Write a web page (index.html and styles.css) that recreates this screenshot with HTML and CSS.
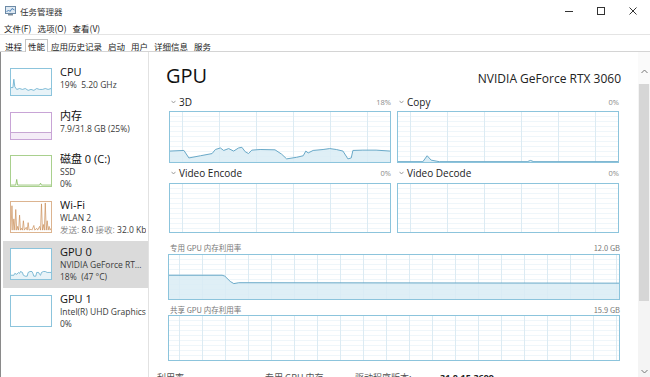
FILE: index.html
```html
<!DOCTYPE html>
<html lang="zh">
<head>
<meta charset="utf-8">
<title>任务管理器</title>
<link rel="stylesheet" href="styles.css">
</head>
<body>
<div class="window">
  <div class="titlebar">
    <svg class="app-icon" width="11" height="10" viewBox="0 0 11 10"><rect x="0.5" y="0.5" width="10" height="7" fill="#dfe9f2" stroke="#6c8aa6"/><polyline points="1.5,6 3.5,4 5,5.5 7,2.5 9.5,4" fill="none" stroke="#3c78b4" stroke-width="0.9"/><rect x="3" y="8" width="5" height="1.5" fill="#7d8b98"/></svg>
    <span class="app-title">任务管理器</span>
    <span class="spacer"></span>
    <span class="ctl"><svg width="10" height="10" viewBox="0 0 10 10"><line x1="1" y1="5.5" x2="9" y2="5.5" stroke="#333" stroke-width="1"/></svg></span>
    <span class="ctl"><svg width="10" height="10" viewBox="0 0 10 10"><rect x="1.5" y="1.5" width="7" height="7" fill="none" stroke="#333" stroke-width="1"/></svg></span>
    <span class="ctl"><svg width="10" height="10" viewBox="0 0 10 10"><path d="M1.5 1.5 L8.5 8.5 M8.5 1.5 L1.5 8.5" stroke="#333" stroke-width="1"/></svg></span>
  </div>
  <div class="menubar">
    <span>文件(F)</span><span>选项(O)</span><span>查看(V)</span>
  </div>
  <div class="tabs">
    <span class="tab">进程</span>
    <span class="tab active">性能</span>
    <span class="tab">应用历史记录</span>
    <span class="tab">启动</span>
    <span class="tab">用户</span>
    <span class="tab">详细信息</span>
    <span class="tab">服务</span>
  </div>
  <div class="content">
    <div class="sidebar">
      <div class="item h44">
        <svg class="thumb small blue" viewBox="0 0 42 28" preserveAspectRatio="none"><polygon points="0,20 2,20 3,11 4,19 6,22 9,21 12,22 15,21 18,23 21,22 24,23 27,21 30,22 33,22 36,21 39,22 42,21 42,28 0,28" fill="#e8f3f8"/><polyline points="0,20 2,20 3,11 4,19 6,22 9,21 12,22 15,21 18,23 21,22 24,23 27,21 30,22 33,22 36,21 39,22 42,21" fill="none" stroke="#5aa7c9" stroke-width="0.8"/></svg>
        <div class="info"><div class="name">CPU</div><div class="sub">19%&nbsp; 5.20 GHz</div></div>
      </div>
      <div class="item h43">
        <svg class="thumb small purple" viewBox="0 0 42 28" preserveAspectRatio="none"><rect x="0" y="21" width="42" height="7" fill="#f4ecf7"/><line x1="0" y1="21" x2="42" y2="21" stroke="#b58bc6" stroke-width="0.8"/></svg>
        <div class="info"><div class="name">内存</div><div class="sub">7.9/31.8 GB (25%)</div></div>
      </div>
      <div class="item h46">
        <svg class="thumb green" viewBox="0 0 42 32" preserveAspectRatio="none"><polyline points="0,31 5,31 6,25 7,31 30,31 31,29 32,31 42,31" fill="none" stroke="#7fb857" stroke-width="0.8"/></svg>
        <div class="info"><div class="name">磁盘 0 (C:)</div><div class="sub">SSD</div><div class="sub">0%</div></div>
      </div>
      <div class="item h47">
        <svg class="thumb orange" viewBox="0 0 42 32" preserveAspectRatio="none"><polyline points="0,30 1,4 2,30 3,18 4,30 5,8 6,30 7,26 8,30 9,14 10,30 11,28 12,30 13,20 14,30 16,27 17,30 18,22 19,30 21,29 22,30 24,25 25,30 27,28 28,30 30,26 31,30 32,2 33,30 34,24 35,30 36,1 37,30 38,20 39,30 40,26 41,30 42,28" fill="none" stroke="#c98a52" stroke-width="0.7"/></svg>
        <div class="info"><div class="name">Wi-Fi</div><div class="sub">WLAN 2</div><div class="sub nowrap"><span class="dim">发送:</span> 8.0 <span class="dim">接收:</span> 32.0 Kbps</div></div>
      </div>
      <div class="item h47 selected">
        <svg class="thumb blue" viewBox="0 0 42 32" preserveAspectRatio="none"><polygon points="0,28 3,28 4,26 6,27 8,25 9,26 10,24 12,25 13,28 15,29 17,29 18,25 20,24 22,24 23,26 24,29 26,29 27,25 29,25 30,27 31,28 32,25 34,24 36,24 38,25 40,25 42,25 42,32 0,32" fill="#e8f3f8"/><polyline points="0,28 3,28 4,26 6,27 8,25 9,26 10,24 12,25 13,28 15,29 17,29 18,25 20,24 22,24 23,26 24,29 26,29 27,25 29,25 30,27 31,28 32,25 34,24 36,24 38,25 40,25 42,25" fill="none" stroke="#5aa7c9" stroke-width="0.8"/></svg>
        <div class="info"><div class="name">GPU 0</div><div class="sub">NVIDIA GeForce RT...</div><div class="sub">18%&nbsp; (47 °C)</div></div>
      </div>
      <div class="item h47">
        <svg class="thumb blue" viewBox="0 0 42 32"></svg>
        <div class="info"><div class="name">GPU 1</div><div class="sub nowrap">Intel(R) UHD Graphics</div><div class="sub">0%</div></div>
      </div>
    </div>
    <div class="main">
      <div class="header">
        <span class="big">GPU</span>
        <span class="model">NVIDIA GeForce RTX 3060</span>
      </div>
      <div class="grid2">
        <div class="panel">
          <div class="label"><span class="lbl"><svg class="chev" width="5" height="4" viewBox="0 0 5 4"><polyline points="0.5,0.8 2.5,3 4.5,0.8" fill="none" stroke="#888" stroke-width="0.8"/></svg>3D</span><span class="pct">18%</span></div>
          <div class="chart c52">
            <svg viewBox="0 0 664 160" preserveAspectRatio="none"><polygon points="0,125 42,123 57,147 92,140 127,133 137,120 152,115 162,123 177,117 192,125 207,115 217,113 227,127 237,133 247,122 272,120 317,121 337,135 352,150 382,145 402,140 410,125 417,131 432,123 462,120 482,117 502,120 522,125 537,150 547,147 552,123 582,122 622,122 664,125 664,160 0,160" fill="#d9ecf5" fill-opacity="0.85"/><polyline points="0,125 42,123 57,147 92,140 127,133 137,120 152,115 162,123 177,117 192,125 207,115 217,113 227,127 237,133 247,122 272,120 317,121 337,135 352,150 382,145 402,140 410,125 417,131 432,123 462,120 482,117 502,120 522,125 537,150 547,147 552,123 582,122 622,122 664,125" fill="none" stroke="#69a9c8" stroke-width="1" vector-effect="non-scaling-stroke"/></svg>
          </div>
        </div>
        <div class="panel">
          <div class="label"><span class="lbl"><svg class="chev" width="5" height="4" viewBox="0 0 5 4"><polyline points="0.5,0.8 2.5,3 4.5,0.8" fill="none" stroke="#888" stroke-width="0.8"/></svg>Copy</span><span class="pct">0%</span></div>
          <div class="chart c52">
            <svg viewBox="0 0 664 160" preserveAspectRatio="none"><polygon points="0,159 75,159 88,140 100,154 115,157 125,159 390,159 400,155 410,159 664,159 664,160 0,160" fill="#d9ecf5"/><polyline points="0,159 75,159 88,140 100,154 115,157 125,159 390,159 400,155 410,159 664,159" fill="none" stroke="#69a9c8" stroke-width="1" vector-effect="non-scaling-stroke"/></svg>
          </div>
        </div>
        <div class="panel">
          <div class="label"><span class="lbl"><svg class="chev" width="5" height="4" viewBox="0 0 5 4"><polyline points="0.5,0.8 2.5,3 4.5,0.8" fill="none" stroke="#888" stroke-width="0.8"/></svg>Video Encode</span><span class="pct">0%</span></div>
          <div class="chart c50"></div>
        </div>
        <div class="panel">
          <div class="label"><span class="lbl"><svg class="chev" width="5" height="4" viewBox="0 0 5 4"><polyline points="0.5,0.8 2.5,3 4.5,0.8" fill="none" stroke="#888" stroke-width="0.8"/></svg>Video Decode</span><span class="pct">0%</span></div>
          <div class="chart c50"></div>
        </div>
      </div>
      <div class="wide first">
        <div class="label small"><span>专用 GPU 内存利用率</span><span>12.0 GB</span></div>
        <div class="chart wide-chart">
          <svg viewBox="0 0 1000 100" preserveAspectRatio="none"><polygon points="0,46 118,46 124,48 136,60 144,65 155,63 1000,64 1000,100 0,100" fill="#d9ecf5" fill-opacity="0.85"/><polyline points="0,46 118,46 124,48 136,60 144,65 155,63 1000,64" fill="none" stroke="#69a9c8" stroke-width="1" vector-effect="non-scaling-stroke"/></svg>
        </div>
      </div>
      <div class="wide second">
        <div class="label small"><span>共享 GPU 内存利用率</span><span>15.9 GB</span></div>
        <div class="chart wide-chart"></div>
      </div>
      <div class="stats">
        <span class="s1">利用率</span>
        <span class="s2">专用 GPU 内存</span>
        <span class="s3">驱动程序版本:</span>
        <span class="s4">31.0.15.3699</span>
      </div>
    </div>
    <div class="scrollbar">
      <div class="arrow up"><svg width="7" height="5" viewBox="0 0 7 5"><polyline points="0.5,4 3.5,1 6.5,4" fill="none" stroke="#777" stroke-width="1"/></svg></div>
      <div class="sthumb"></div>
      <div class="strack"></div>
      <div class="arrow down"><svg width="7" height="5" viewBox="0 0 7 5"><polyline points="0.5,1 3.5,4 6.5,1" fill="none" stroke="#777" stroke-width="1"/></svg></div>
    </div>
  </div>
</div>
</body>
</html>
```
FILE: styles.css
```css
* { box-sizing: border-box; }
html, body { margin: 0; padding: 0; background: #fff; }
body {
  font-family: "Open Sans", "Noto Sans CJK SC", sans-serif;
  color: #1a1a1a;
  width: 650px;
  height: 377px;
  overflow: hidden;
}
.window { width: 650px; height: 377px; display: flex; flex-direction: column; overflow: hidden; }

.titlebar { height: 21px; display: flex; align-items: center; padding-left: 5px; flex: none; }
.app-icon { margin-right: 4px; margin-top: 0px; }
.app-title { font-family: "Noto Sans CJK SC", sans-serif; font-size: 8.5px; color: #333; }
.spacer { flex: 1; }
.ctl { width: 32px; height: 21px; display: flex; align-items: center; justify-content: center; }
.ctl:last-child { margin-right: 1px; }

.menubar { height: 13px; display: flex; align-items: center; gap: 6px; padding-left: 4px; font-size: 8.5px; color: #222; flex: none; font-family: "Noto Sans CJK SC", sans-serif; }

.tabs { height: 18px; display: flex; align-items: flex-end; padding-left: 2px; border-top: 1px solid #e4e4e4; border-bottom: 1px solid #d4d4d4; flex: none; font-family: "Noto Sans CJK SC", sans-serif; font-size: 8.5px; color: #222; }
.tab { padding: 0 2px; height: 13px; line-height: 12px; margin-bottom: -1px; border: 1px solid transparent; border-bottom: none; margin-right: 0; }
.tab.active { border-color: #c4c4c4; background: #fff; }

.content { flex: 1; display: flex; min-height: 0; }
.sidebar { width: 149px; flex: none; border-left: 1px solid #8a8a8a; border-right: 1px solid #e2e2e2; padding-top: 9px; overflow: hidden; }
.item { display: flex; align-items: flex-start; padding-left: 9px; padding-right: 2px; }
.item.h44 { height: 44px; }
.item.h43 { height: 43px; }
.item.h46 { height: 46px; }
.item.h47 { height: 47px; }
.item.selected { background: #dadada; margin-left: 2px; padding-left: 7px; }
.thumb { width: 42px; height: 32px; margin-top: 7px; flex: none; display: block; background: #fff; border: 1px solid; }
.thumb.small { height: 28px; }
.thumb.blue { border-color: #8cc4dc; }
.thumb.purple { border-color: #c8a4d6; }
.thumb.green { border-color: #a9d08e; }
.thumb.orange { border-color: #dcb490; }
.info { margin-left: 8px; padding-top: 4px; min-width: 0; overflow: hidden; }
.name { font-size: 11px; line-height: 14px; color: #111; white-space: nowrap; }
.sub { font-size: 8.5px; line-height: 12px; color: #3a3a3a; white-space: nowrap; }
.sub .dim { color: #8a8a8a; }
.nowrap { overflow: hidden; }

.main { flex: 1; min-width: 0; padding: 12px 18px 0 20px; overflow: hidden; }
.header { display: flex; align-items: baseline; justify-content: space-between; height: 24px; }
.big { font-size: 20px; line-height: 24px; margin-left: -3px; color: #111; }
.model { font-size: 12px; color: #222; margin-right: -1px; }

.grid2 { display: grid; grid-template-columns: 222px 222px; column-gap: 6px; margin-top: 7px; }
.panel:nth-child(3), .panel:nth-child(4) { margin-top: 3px; }
.label { display: flex; justify-content: space-between; align-items: center; height: 14px; font-size: 10px; color: #222; }
.lbl { display: flex; align-items: center; padding-left: 2px; }
.chev { margin-right: 3px; }
.pct { font-size: 7.5px; color: #8a8a8a; }
.chart {
  border: 1px solid #8cc4dc;
  background-color: #fff;
  background-image:
    linear-gradient(to right, #dcebf3 1px, transparent 1px),
    linear-gradient(to bottom, #eff6fa 1px, transparent 1px);
  background-size: 37px 100%, 100% 5px;
  background-position: 12px 0, 0 4px;
  margin-top: 2px;
}
.chart svg { display: block; width: 100%; height: 100%; }
.c52 { height: 52px; }
.c50 { height: 50px; margin-top: 3px; }

.wide.first { margin-top: 8px; }
.wide.second { margin-top: 3px; }
.label.small { height: 12px; font-size: 7.5px; color: #777; padding-left: 1px; font-family: "Noto Sans CJK SC", sans-serif; }
.wide-chart { height: 46px; margin-top: 1px; margin-left: -1px; background-size: 23px 100%, 100% 5px; background-position: 10px 0, 0 4px; }
.wide.second .wide-chart { margin-top: 0; }

.stats { display: flex; margin-top: 11px; margin-left: -12px; font-size: 9px; line-height: 12px; color: #555; font-family: "Noto Sans CJK SC", sans-serif; }
.s1 { width: 108px; }
.s2 { width: 90px; }
.s3 { width: 85px; }
.s4 { color: #222; font-weight: 700; font-family: "Open Sans", sans-serif; }

.scrollbar { width: 12px; flex: none; display: flex; flex-direction: column; background: #f4f4f4; }
.arrow { height: 17px; display: flex; align-items: center; justify-content: center; flex: none; }
.arrow.up { height: 32px; padding-top: 6px; background: #fafafa; }
.sthumb { height: 217px; background: #d6d6d6; flex: none; margin: 0 1px; }
.strack { flex: 1; }
.arrow.down { align-items: flex-end; padding-bottom: 3px; }
```
